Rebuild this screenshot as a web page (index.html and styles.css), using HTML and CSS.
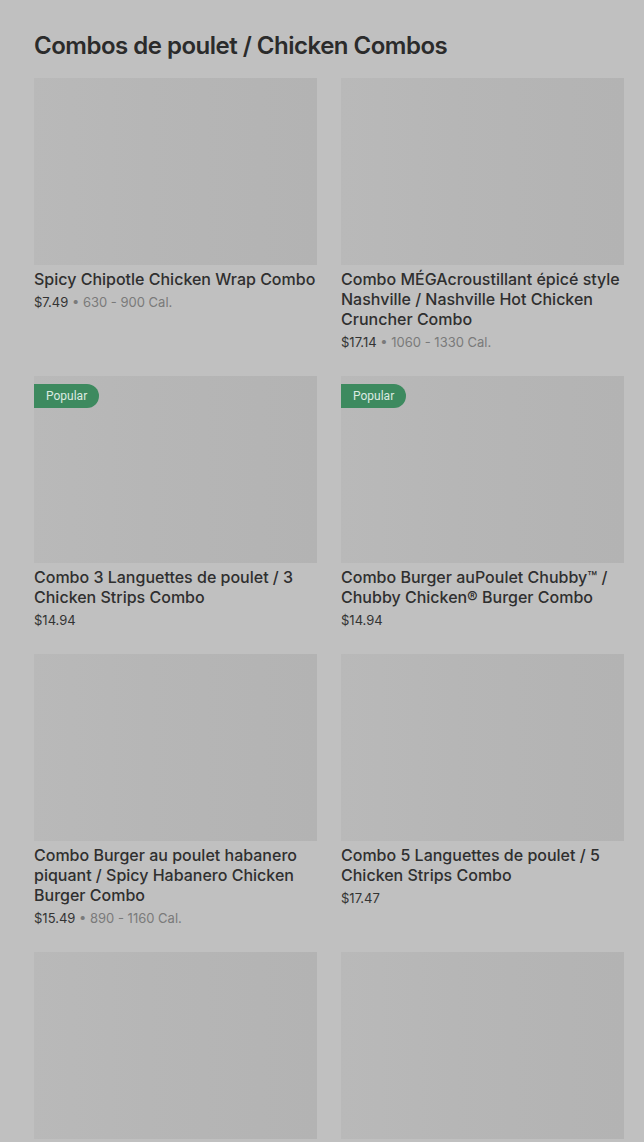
FILE: index.html
```html
<!DOCTYPE html>
<html lang="fr">
<head>
<meta charset="utf-8">
<title>Combos de poulet / Chicken Combos</title>
<link rel="stylesheet" href="styles.css">
</head>
<body>
<main class="page">
  <h2 class="section-title">Combos de poulet / Chicken Combos</h2>
  <ul class="grid">
    <li class="card">
      <div class="thumb"></div>
      <div class="name">Spicy Chipotle Chicken Wrap Combo</div>
      <div class="meta"><span class="price">$7.49</span><span class="dot"> • </span><span class="cal">630 - 900 Cal.</span></div>
    </li>
    <li class="card">
      <div class="thumb"></div>
      <div class="name">Combo MÉGAcroustillant épicé style Nashville / Nashville Hot Chicken Cruncher Combo</div>
      <div class="meta"><span class="price">$17.14</span><span class="dot"> • </span><span class="cal">1060 - 1330 Cal.</span></div>
    </li>
    <li class="card">
      <div class="thumb"><span class="badge">Popular</span></div>
      <div class="name">Combo 3 Languettes de poulet / 3 Chicken Strips Combo</div>
      <div class="meta"><span class="price">$14.94</span></div>
    </li>
    <li class="card">
      <div class="thumb"><span class="badge">Popular</span></div>
      <div class="name">Combo Burger auPoulet Chubby™ / Chubby Chicken® Burger Combo</div>
      <div class="meta"><span class="price">$14.94</span></div>
    </li>
    <li class="card">
      <div class="thumb"></div>
      <div class="name">Combo Burger au poulet habanero piquant / Spicy Habanero Chicken Burger Combo</div>
      <div class="meta"><span class="price">$15.49</span><span class="dot"> • </span><span class="cal">890 - 1160 Cal.</span></div>
    </li>
    <li class="card">
      <div class="thumb"></div>
      <div class="name">Combo 5 Languettes de poulet / 5 Chicken Strips Combo</div>
      <div class="meta"><span class="price">$17.47</span></div>
    </li>
    <li class="card">
      <div class="thumb"></div>
      <div class="name">Combo Sandwich au poulet / Chicken Sandwich Combo</div>
      <div class="meta"><span class="price">$12.99</span></div>
    </li>
    <li class="card">
      <div class="thumb"></div>
      <div class="name">Combo Wrap au poulet / Chicken Wrap Combo</div>
      <div class="meta"><span class="price">$11.49</span></div>
    </li>
  </ul>
</main>
</body>
</html>
```
FILE: styles.css
```css
html, body {
  margin: 0;
  padding: 0;
  background: #c0c0c0;
  overflow: hidden;
}
body {
  font-family: "Inter", "Roboto", "Liberation Sans", sans-serif;
  color: #2e2e2e;
}
.page {
  padding: 30px 20px 0 34px;
}
.section-title {
  margin: 0 0 16px 0;
  font-size: 24px;
  line-height: 32px;
  font-weight: 600;
  letter-spacing: -0.5px;
  color: #2b2b2b;
}
.grid {
  list-style: none;
  margin: 0;
  padding: 0;
  display: grid;
  grid-template-columns: 283px 283px;
  column-gap: 24px;
  row-gap: 24px;
}
.card {
  display: flex;
  flex-direction: column;
}
.thumb {
  position: relative;
  height: 187px;
  background: linear-gradient(90deg, #b9b9b9 0%, #b6b6b6 40%, #b3b3b3 100%);
}
.badge {
  position: absolute;
  top: 8px;
  left: 0;
  height: 24px;
  line-height: 24px;
  padding: 0 12px;
  border-radius: 0 12px 12px 0;
  background: #3d8a5f;
  color: #dcebe2;
  font-size: 12px;
  font-family: "Roboto", "Inter", sans-serif;
}
.name {
  margin-top: 4px;
  font-size: 16px;
  line-height: 20px;
  font-weight: 500;
  color: #2f2f2f;
}
.meta {
  margin-top: 3px;
  font-size: 13px;
  line-height: 20px;
}
.price {
  color: #333;
}
.dot, .cal {
  color: #7a7a7a;
}
```
